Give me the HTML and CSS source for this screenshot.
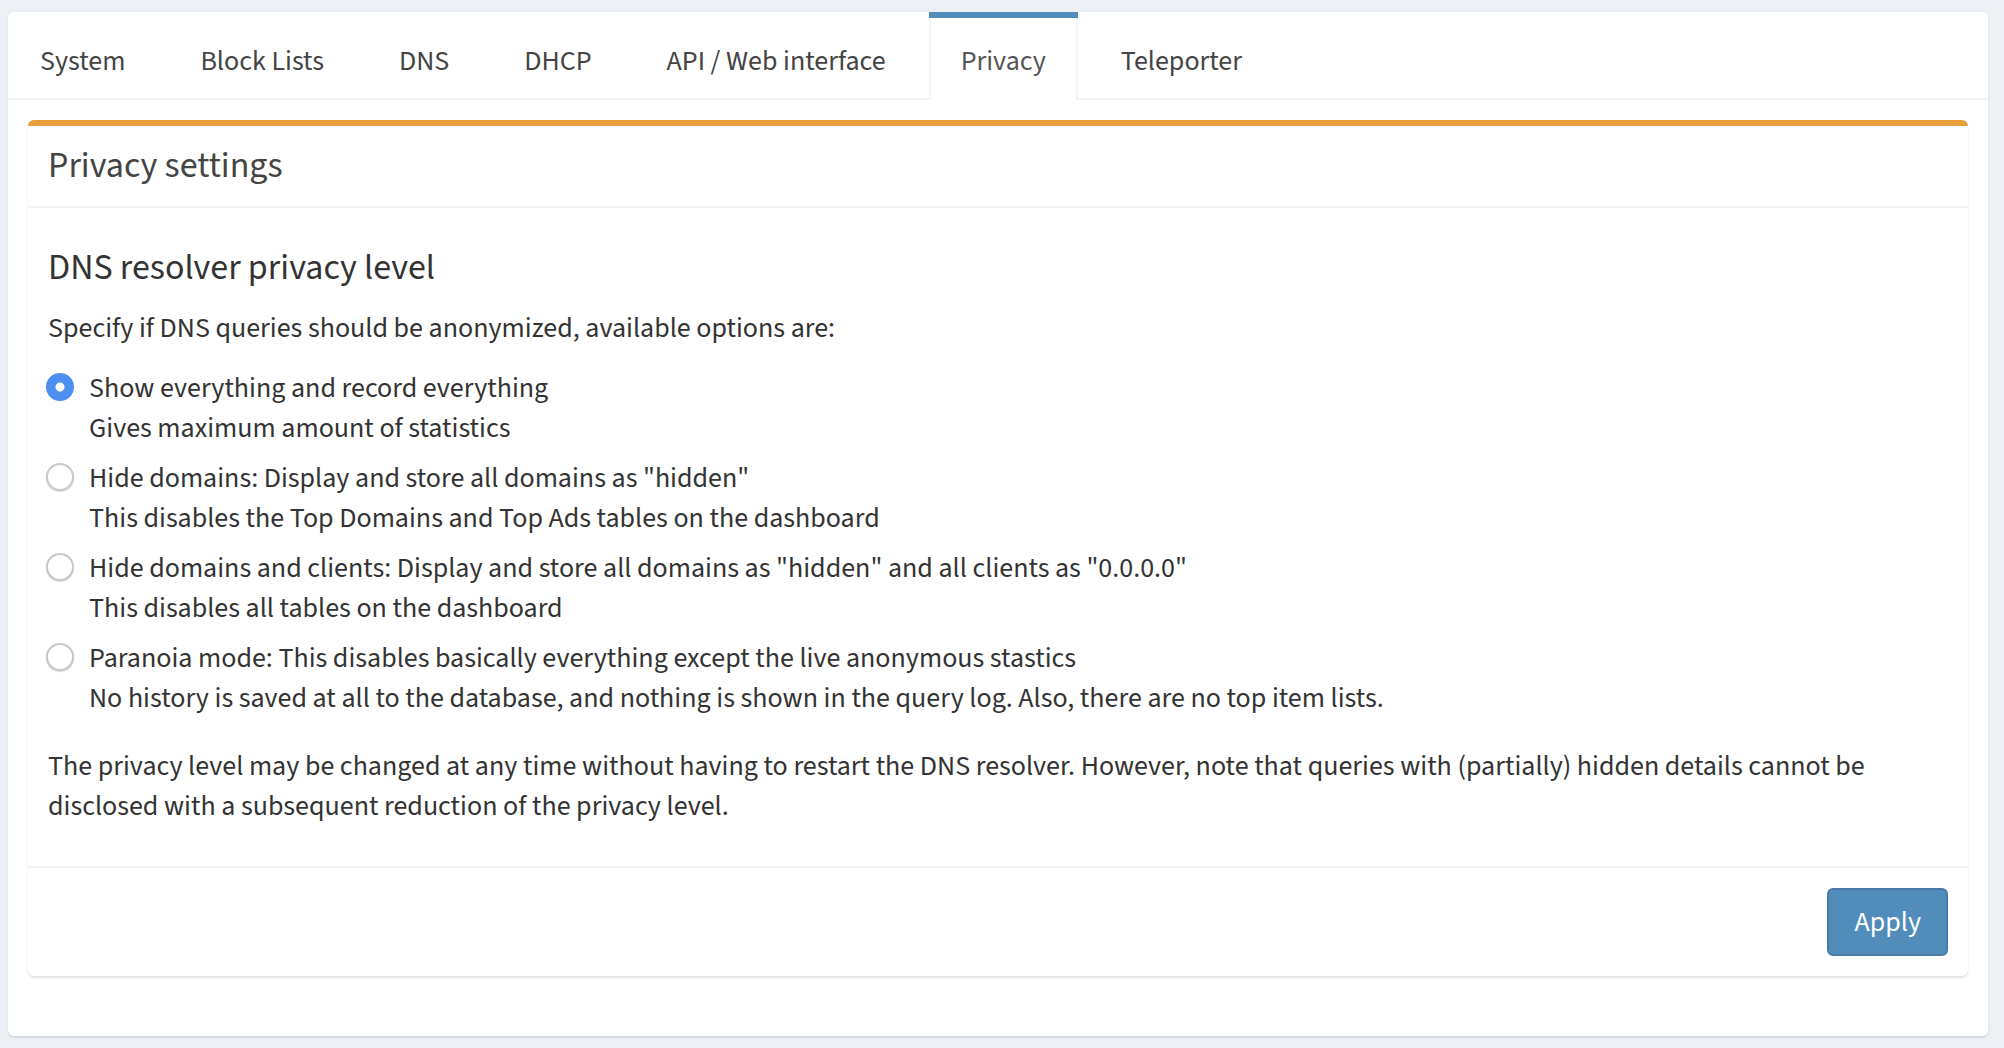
FILE: index.html
```html
<!DOCTYPE html>
<html lang="en">
<head>
  <meta charset="UTF-8" />
  <meta name="viewport" content="width=device-width, initial-scale=1" />
  <title>Settings - Privacy</title>
  <link rel="stylesheet" href="styles.css">
</head>
<body>

<div class="nav-tabs-custom">
  <ul class="nav-tabs">
    <li><a href="#system">System</a></li>
    <li><a href="#blocklists">Block Lists</a></li>
    <li><a href="#dns">DNS</a></li>
    <li><a href="#dhcp">DHCP</a></li>
    <li><a href="#api">API / Web interface</a></li>
    <li class="active"><a href="#privacy">Privacy</a></li>
    <li><a href="#teleporter">Teleporter</a></li>
  </ul>

  <div class="tab-content">
    <form class="box box-warning">
      <div class="box-header">
        <h3 class="box-title">Privacy settings</h3>
      </div>

      <div class="box-body">
        <h4>DNS resolver privacy level</h4>
        <p>Specify if DNS queries should be anonymized, available options are:</p>

        <label class="radio">
          <input type="radio" name="privacylevel" value="0" checked>
          <span>Show everything and record everything<br>Gives maximum amount of statistics</span>
        </label>
        <label class="radio">
          <input type="radio" name="privacylevel" value="1">
          <span>Hide domains: Display and store all domains as "hidden"<br>This disables the Top Domains and Top Ads tables on the dashboard</span>
        </label>
        <label class="radio">
          <input type="radio" name="privacylevel" value="2">
          <span>Hide domains and clients: Display and store all domains as "hidden" and all clients as "0.0.0.0"<br>This disables all tables on the dashboard</span>
        </label>
        <label class="radio">
          <input type="radio" name="privacylevel" value="3">
          <span>Paranoia mode: This disables basically everything except the live anonymous stastics<br>No history is saved at all to the database, and nothing is shown in the query log. Also, there are no top item lists.</span>
        </label>

        <p class="note">The privacy level may be changed at any time without having to restart the DNS resolver. However, note that queries with (partially) hidden details cannot be disclosed with a subsequent reduction of the privacy level.</p>
      </div>

      <div class="box-footer">
        <button type="submit" class="btn-apply">Apply</button>
      </div>
    </form>
  </div>
</div>

</body>
</html>
```
FILE: styles.css
```css
:root {
  --page-bg: rgb(236, 240, 245);
  --text: rgb(51, 51, 51);
  --text-muted: rgb(68, 68, 68);
  --line: rgb(244, 244, 244);
  --primary: rgb(82, 140, 187);
  --primary-dark: rgb(72, 122, 165);
  --warning: rgb(231, 158, 59);
  --radio-on: rgb(76, 143, 240);
}

* {
  box-sizing: border-box;
}

body {
  margin: 0;
  padding: 12px 16px 12px 8px;
  background-color: var(--page-bg);
  color: var(--text);
  font-family: 'Source Sans 3', 'Source Sans Pro', Lato, sans-serif;
  font-size: 28px;
  line-height: 40px;
}

.nav-tabs-custom {
  background: #fff;
  border-radius: 6px;
  box-shadow: 0 2px 2px rgba(0, 0, 0, 0.1);
}

.nav-tabs {
  display: flex;
  margin: 0;
  padding: 0;
  list-style: none;
  border-bottom: 2px solid var(--line);
}

.nav-tabs li {
  margin: 0 11px -2px 0;
  border-top: 6px solid transparent;
}

.nav-tabs li a {
  display: block;
  padding: 23px 30px 19px;
  color: var(--text-muted);
  text-decoration: none;
  border-left: 2px solid transparent;
  border-right: 2px solid transparent;
}

.nav-tabs li.active {
  border-top-color: var(--primary);
}

.nav-tabs li.active a {
  background: #fff;
  color: rgb(85, 85, 85);
  border-left-color: var(--line);
  border-right-color: var(--line);
}

.tab-content {
  padding: 20px;
}

.box {
  display: block;
  margin: 0 0 40px;
  background: #fff;
  border-top: 6px solid var(--warning);
  border-radius: 6px;
  box-shadow: 0 2px 2px rgba(0, 0, 0, 0.1), 0 0 1px rgba(0, 0, 0, 0.08);
}

.box-header {
  padding: 20px;
  border-bottom: 2px solid var(--line);
}

.box-title {
  margin: 0;
  font-size: 36px;
  font-weight: 400;
  line-height: 40px;
  color: var(--text-muted);
}

.box-body {
  padding: 20px;
}

.box-body h4 {
  margin: 20px 0;
  font-size: 36px;
  font-weight: 400;
  line-height: 40px;
}

.box-body p {
  margin: 0 0 20px;
}

.radio {
  display: flex;
  align-items: flex-start;
  margin: 20px 0;
  cursor: pointer;
}

.radio + .radio {
  margin-top: -10px;
}

.radio input {
  appearance: none;
  -webkit-appearance: none;
  flex: none;
  width: 28px;
  height: 28px;
  margin: 5px 15px 0 -2px;
  border: 2px solid rgb(200, 200, 200);
  border-radius: 50%;
  background: #fff;
  box-shadow: 0 1px 1px rgba(0, 0, 0, 0.15);
}

.radio input:checked {
  border-color: var(--radio-on);
  background: radial-gradient(circle, #fff 0, #fff 4px, var(--radio-on) 5px);
  box-shadow: none;
}

.box-body p.note {
  margin-top: 28px;
}

.box-footer {
  display: flex;
  justify-content: flex-end;
  padding: 20px;
  border-top: 2px solid var(--line);
}

.btn-apply {
  padding: 12px 25px;
  font-family: inherit;
  font-size: 28px;
  line-height: 40px;
  color: #fff;
  background-color: var(--primary);
  border: 2px solid var(--primary-dark);
  border-radius: 6px;
  cursor: pointer;
}

.btn-apply:hover {
  background-color: var(--primary-dark);
}
```
